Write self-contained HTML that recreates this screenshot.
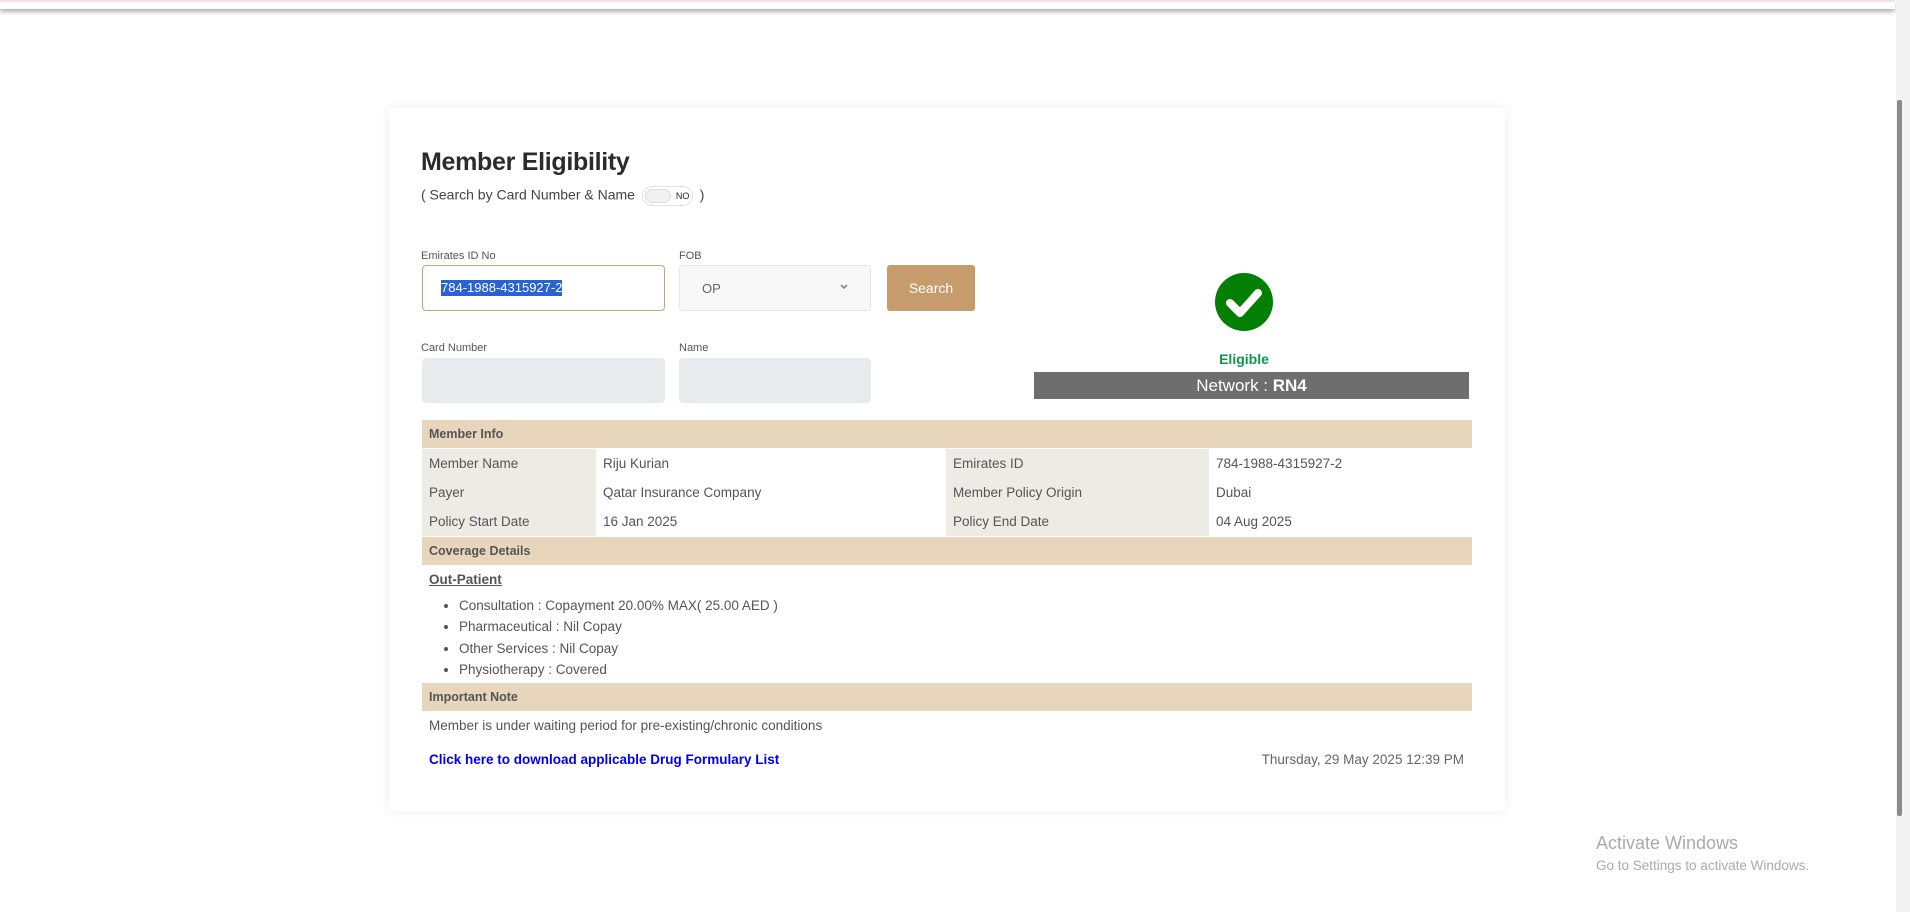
<!DOCTYPE html>
<html><head><meta charset="utf-8"><style>
*{box-sizing:border-box;margin:0;padding:0}
body{width:1910px;height:912px;background:#fff;font-family:"Liberation Sans",sans-serif;position:relative;overflow:hidden;color:#555}
.topbar{position:absolute;left:0;top:0;width:1895px;height:9px;background:#fff;border-top:2px solid #f7dfe3;box-shadow:0 3px 4px rgba(0,0,0,.3)}
.sb{position:absolute;right:0;top:0;width:14px;height:912px;background:#f3f3f3}
.sbt{position:absolute;right:8px;top:100px;width:5px;height:716px;background:#8a8a8a;border-radius:2px}
.card{position:absolute;left:389px;top:108px;width:1116px;height:703px;background:#fff;box-shadow:0 0 14px rgba(0,0,0,.07);border-radius:3px}
.abs{position:absolute}
h1{position:absolute;left:32px;top:40px;font-size:25px;font-weight:bold;color:#2b2b2b;letter-spacing:-.3px}
.sub{left:32px;top:78px;font-size:14px;color:#444;white-space:nowrap}
.tog{display:inline-block;position:relative;vertical-align:middle;width:51px;height:20px;border:1px solid #e2e2e2;border-radius:10px;background:#fff;margin:0 3px}
.tog i{position:absolute;left:2px;top:2px;width:26px;height:14px;border-radius:8px;background:#f1f1f1;border:1px solid #ddd}
.tog b{position:absolute;left:33px;top:4px;font-size:9px;font-weight:normal;color:#222}
.lbl{font-size:11px;color:#555}
.inp{position:absolute;border:1px solid #e6e6e6;border-radius:4px;background:#f8f8f8}
.row{position:absolute;left:33px;width:1050px;font-size:13.5px;color:#555}
.hd{background:#e7d5bc;font-weight:bold;font-size:12.5px;color:#555;padding-left:7px}
td{height:29px;padding-left:7px;font-size:13.5px;color:#555}
.g{background:#eeebe5}
ul{position:absolute;left:70px;top:487px;font-size:13.5px;line-height:21.3px;color:#555}
</style></head><body>
<div class="topbar"></div>
<div class="sb"><div class="sbt"></div></div>
<div class="card">
<h1>Member Eligibility</h1>
<div class="abs sub">( Search by Card Number &amp; Name <span class="tog"><i></i><b>NO</b></span> )</div>
<div class="abs lbl" style="left:32px;top:142px">Emirates ID No</div>
<div class="abs lbl" style="left:290px;top:142px">FOB</div>
<div class="inp" style="left:33px;top:157px;width:243px;height:46px;background:#fff;border-color:#c9a27a"><span style="position:absolute;left:18px;top:14px;background:#2a62d6;color:#fff;font-size:13px;line-height:16px">784-1988-4315927-2</span></div>
<div class="inp" style="left:290px;top:157px;width:192px;height:46px"><span style="position:absolute;left:22px;top:15px;font-size:13px;color:#666">OP</span><svg style="position:absolute;right:22px;top:18px" width="8" height="6" viewBox="0 0 8 6"><path d="M1 1 L4 4 L7 1" stroke="#888" stroke-width="1.6" fill="none"/></svg></div>
<div class="abs" style="left:498px;top:157px;width:88px;height:46px;background:#c69c6d;border-radius:3px;color:#fff;font-size:14px;text-align:center;line-height:46px">Search</div>
<div class="abs lbl" style="left:32px;top:234px">Card Number</div>
<div class="abs lbl" style="left:290px;top:234px">Name</div>
<div class="inp" style="left:33px;top:250px;width:243px;height:45px;background:#e8ebee;border-color:#e8ebee"></div>
<div class="inp" style="left:290px;top:250px;width:192px;height:45px;background:#e8ebee;border-color:#e8ebee"></div>
<svg class="abs" style="left:826px;top:165px" width="60" height="60" viewBox="0 0 60 60"><circle cx="29" cy="29" r="29" fill="#038003"/><path d="M15 30 L25 40 L43 20" stroke="#fff" stroke-width="8" fill="none" stroke-linecap="round" stroke-linejoin="round"/></svg>
<div class="abs" style="left:826px;top:243px;width:58px;text-align:center;font-weight:bold;font-size:14px;color:#0a9a4a">Eligible</div>
<div class="abs" style="left:645px;top:264px;width:435px;height:27px;background:#6e6e6e;color:#fff;text-align:center;font-size:17px;line-height:27px">Network : <b>RN4</b></div>
<div class="row hd" style="top:312px;height:28px;line-height:28px">Member Info</div>
<table class="row" style="top:341px;border-collapse:collapse">
<tr><td class="g" style="width:174px">Member Name</td><td style="width:350px">Riju Kurian</td><td class="g" style="width:263px">Emirates ID</td><td>784-1988-4315927-2</td></tr>
<tr><td class="g">Payer</td><td>Qatar Insurance Company</td><td class="g">Member Policy Origin</td><td>Dubai</td></tr>
<tr><td class="g">Policy Start Date</td><td>16 Jan 2025</td><td class="g">Policy End Date</td><td>04 Aug 2025</td></tr>
</table>
<div class="row hd" style="top:429px;height:28px;line-height:28px">Coverage Details</div>
<div class="abs" style="left:40px;top:464px;font-size:13.5px;font-weight:bold;text-decoration:underline;color:#555">Out-Patient</div>
<ul><li>Consultation : Copayment 20.00% MAX( 25.00 AED )</li><li>Pharmaceutical : Nil Copay</li><li>Other Services : Nil Copay</li><li>Physiotherapy : Covered</li></ul>
<div class="row hd" style="top:575px;height:28px;line-height:28px">Important Note</div>
<div class="abs" style="left:40px;top:610px;font-size:13.5px">Member is under waiting period for pre-existing/chronic conditions</div>
<div class="abs" style="left:40px;top:644px;font-size:13.5px;font-weight:bold;color:#0000ee">Click here to download applicable Drug Formulary List</div>
<div class="abs" style="right:41px;top:644px;font-size:13.5px;color:#666">Thursday, 29 May 2025 12:39 PM</div>
</div>
<div class="abs" style="left:1596px;top:833px;font-size:18px;color:#aaa">Activate Windows</div>
<div class="abs" style="left:1596px;top:858px;font-size:13.5px;color:#aaa">Go to Settings to activate Windows.</div>
</body></html>
